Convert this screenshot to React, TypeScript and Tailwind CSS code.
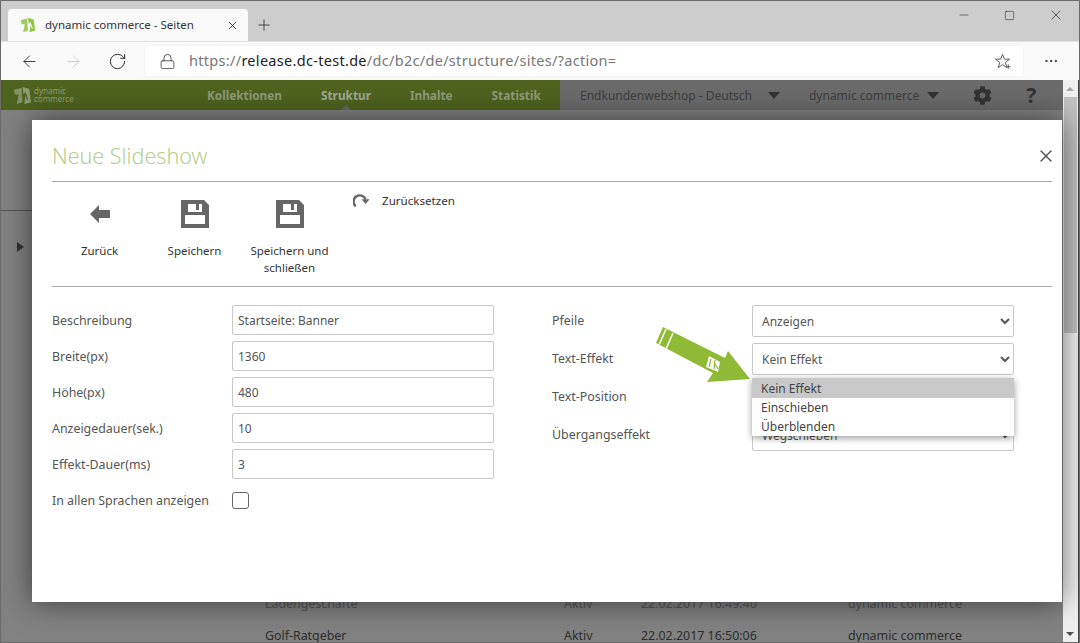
import React from "react";
import { X, Plus, ArrowLeft, ArrowRight, RotateCw, Lock, Minus, Square, MoreHorizontal } from "lucide-react";
import { FaCog } from "react-icons/fa";

const F = { fontFamily: '"Noto Sans", sans-serif' };

function Logo({ className, c = "#8cc63f" }: { className?: string; c?: string }) {
  return (
    <svg viewBox="0 0 20 20" className={className}>
      <polygon points="1,4 9,2 10,17 4,19 6,9 2,9" fill={c} opacity="0.85" />
      <polygon points="10,1 17,3 19,17 12,19 13,10 15,15 16,14 13,6 11,9" fill={c} />
    </svg>
  );
}

function Floppy() {
  return (
    <svg viewBox="0 0 28 28" className="h-[28px] w-[28px]">
      <path fillRule="evenodd" fill="#666" d="M0 0h23l5 5v23H0zM7 4v8h14V4zM15 4h3v6h-3zM4 15v9h20v-9z" />
    </svg>
  );
}

function Tool({ icon, label, w }: { icon: React.ReactNode; label: React.ReactNode; w: string }) {
  return (
    <div className={`flex flex-col items-center ${w}`}>
      <div className="flex h-[30px] items-center">{icon}</div>
      <div className="mt-[13px] text-center text-[11.5px] leading-[17px] text-[#333]">{label}</div>
    </div>
  );
}

function Field({ label, value }: { label: string; value: string }) {
  return (
    <div className="flex h-[30px] items-center">
      <label className="w-[180px] pt-[3px] text-[12.4px] text-[#555]">{label}</label>
      <input
        readOnly
        value={value}
        className="h-[30px] w-[262px] rounded-[2px] border border-[#c8c8c8] px-[5px] text-[12px] text-[#555] outline-none"
      />
    </div>
  );
}

function Sel({ label, value }: { label: string; value: string }) {
  return (
    <div className="flex h-[32px] items-center">
      <label className="w-[200px] text-[12.4px] text-[#555]">{label}</label>
      <select
        defaultValue={value}
        className="h-[32px] w-[262px] rounded-[2px] border border-[#c8c8c8] bg-white pl-[5px] text-[12px] text-[#555] outline-none"
      >
        <option>{value}</option>
      </select>
    </div>
  );
}

export default function App() {
  return (
    <div className="flex h-[643px] w-[1080px] flex-col overflow-hidden border border-[#6a6a6a]" style={F}>
      {/* tab strip */}
      <div className="flex h-[40px] shrink-0 items-end bg-[#cdcdcd] pl-[7px]">
        <div className="flex h-[32px] w-[240px] items-center rounded-t-[4px] bg-[#f9f9f9] pl-[12px] pr-[9px]">
          <Logo className="h-[16px] w-[16px]" />
          <span className="ml-[9px] flex-1 text-[11.5px] text-[#333]">dynamic commerce - Seiten</span>
          <X size={13} strokeWidth={1.6} className="text-[#222]" />
        </div>
        <Plus size={18} strokeWidth={1} className="mb-[7px] ml-[7px] text-[#222]" />
        <div className="ml-auto flex h-[40px] items-center self-start pb-[12px] text-[#222]">
          <Minus size={14} strokeWidth={1} />
          <Square size={11} strokeWidth={1.2} className="ml-[33px]" />
          <X size={16} strokeWidth={1} className="ml-[33px] mr-[15px]" />
        </div>
      </div>
      {/* toolbar */}
      <div className="flex h-[39px] shrink-0 items-center border-t border-[#e2e2e2] bg-[#f9f9f9] pl-[19px]">
        <ArrowLeft size={19} strokeWidth={1.1} className="text-[#222]" />
        <ArrowRight size={19} strokeWidth={1.1} className="ml-[25px] text-[#c4c4c4]" />
        <RotateCw size={19} strokeWidth={1.2} className="ml-[25px] text-[#222]" />
        <div className="ml-[18px] flex h-[30px] w-[878px] items-center rounded-[3px] bg-white pl-[14px] shadow-[0_0_2px_rgba(0,0,0,0.08)]">
          <Lock size={17} strokeWidth={1.1} className="text-[#333]" />
          <span className="ml-[13px] text-[14.5px] tracking-[0.3px] text-[#777]">
            https://<span className="text-[#222]">release.dc-test.de</span>/dc/b2c/de/structure/sites/?action=
          </span>
          <svg viewBox="0 0 18 18" className="ml-auto mr-[11px] h-[17px] w-[17px]" fill="none" stroke="#555" strokeWidth="1">
            <path d="M8 1.5l2 5h5.5l-4.5 3.5 1.5 5.500-4.500-3.200-4.500 3.200 1.500-5.500-4.500-3.500h5.500z" />
            <path d="M14 12v5M11.500 14.500h5" />
          </svg>
        </div>
        <MoreHorizontal size={16} strokeWidth={1.4} className="ml-[20px] text-[#222]" />
      </div>

      {/* dimmed app */}
      <div className="relative flex min-h-0 flex-1 flex-col bg-[#828282]">
        {/* app header */}
        <div className="mr-[16px] flex h-[30px] shrink-0 items-center bg-[#6b6b6b] text-[12px]">
          <div className="relative flex h-full w-[559px] shrink-0 items-center bg-[#4f631f] pl-[12px] font-bold text-[#8f9b77]">
            <Logo className="h-[19px] w-[19px]" c="#8f9b77" />
            <span className="ml-[2px] w-[36px] text-[8px] font-normal leading-[8px]">dynamic commerce</span>
            <div className="ml-[137px] flex gap-[39px] pt-[1px] text-[11.8px]">
              <span>Kollektionen</span>
              <span className="text-[#a0a896]">Struktur</span>
              <span>Inhalte</span>
              <span>Statistik</span>
            </div>
            <div className="absolute bottom-0 left-[340px] h-0 w-0 border-x-[5px] border-b-[5px] border-x-transparent border-b-[#6a6a6a]" />
          </div>
          <div className="flex flex-1 items-center pl-[20px] pt-[1px] text-[#3e3e3e]">
            <span>Endkundenwebshop - Deutsch</span>
            <div className="ml-[16px] h-0 w-0 border-x-[6px] border-t-[7px] border-x-transparent border-t-[#333]" />
            <span className="ml-[29px]">dynamic commerce</span>
            <div className="ml-[8px] h-0 w-0 border-x-[6px] border-t-[7px] border-x-transparent border-t-[#333]" />
            <FaCog size={19} className="ml-[34px] text-[#333]" />
            <span className="ml-[34px] text-[21px] font-bold leading-none text-[#333]">?</span>
          </div>
        </div>

        {/* dimmed page content */}
        <div className="relative flex-1">
          <div className="mt-[100px] h-px w-[32px] bg-[#555]" />
          <div className="ml-[16px] mt-[31px] h-0 w-0 border-y-[5px] border-l-[7px] border-y-transparent border-l-[#333]" />
          <div className="mt-[343px] flex text-[12.4px] leading-[18px] text-[#555]">
            <span className="ml-[264px] w-[299px]">Ladengeschäfte</span>
            <span className="w-[77px]">Aktiv</span>
            <span className="w-[207px]">22.02.2017 16:49:40</span>
            <span>dynamic commerce</span>
          </div>
          <div className="mt-[14px] flex text-[12.4px] leading-[18px] text-[#2e2e2e]">
            <span className="ml-[264px] w-[299px]">Golf-Ratgeber</span>
            <span className="w-[77px]">Aktiv</span>
            <span className="w-[207px]">22.02.2017 16:50:06</span>
            <span>dynamic commerce</span>
          </div>
        </div>

        {/* scrollbar */}
        <div className="absolute bottom-0 right-0 top-0 flex w-[16px] flex-col items-center border-r border-[#444] bg-[#f0f0f0] pr-[1px]">
          <div className="mt-[7px] h-0 w-0 border-x-[4px] border-b-[4px] border-x-transparent border-b-[#a8a8a8]" />
          <div className="mt-[6px] h-[236px] w-[13px] bg-[#c1c1c1]" />
          <div className="mb-[6px] mt-auto h-0 w-0 border-x-[4px] border-t-[4px] border-x-transparent border-t-[#505050]" />
        </div>

        {/* modal */}
        <div className="absolute left-[31px] top-[40px] h-[482px] w-[1030px] bg-white pl-[20px] pr-[10px] shadow-[0_0_28px_rgba(0,0,0,0.55)]">
          <div className="flex h-[62px] items-center justify-between border-b border-[#aaa]">
            <span className="pt-[12px] text-[21.500px] font-light text-[#b5cd8e]">Neue Slideshow</span>
            <X size={20} strokeWidth={1.8} className="mr-[-4px] mt-[10px] text-[#555]" />
          </div>
          <div className="flex h-[105px] items-start border-b border-[#aaa] pt-[17px]">
            <Tool
              w="w-[95px]"
              label="Zurück"
              icon={
                <svg viewBox="0 0 20 18" className="h-[18px] w-[20px]">
                  <path fill="#666" d="M0 9l9-9v5h11v8H9v5z" />
                </svg>
              }
            />
            <Tool w="w-[95px]" label="Speichern" icon={<Floppy />} />
            <Tool w="w-[95px]" label={<>Speichern und<br />schließen</>} icon={<Floppy />} />
            <div className="ml-[16px] mt-[-7px] flex items-center">
              <svg viewBox="0 0 20 18" className="h-[16px] w-[18px]">
                <path fill="none" stroke="#666" strokeWidth="2.600" d="M3 15A7 7 0 1 1 14 7" />
                <path fill="#666" d="M9.500 7h9l-4.500 5.500z" />
              </svg>
              <span className="ml-[11px] text-[11.6px] text-[#333]">Zurücksetzen</span>
            </div>
          </div>

          <div className="flex pt-[18px]">
            <div className="flex w-[500px] flex-col gap-[6px]">
              <Field label="Beschreibung" value="Startseite: Banner" />
              <Field label="Breite(px)" value="1360" />
              <Field label="Höhe(px)" value="480" />
              <Field label="Anzeigedauer(sek.)" value="10" />
              <Field label="Effekt-Dauer(ms)" value="3" />
              <div className="flex h-[30px] items-center">
                <label className="w-[180px] pt-[3px] text-[12.4px] text-[#555]">In allen Sprachen anzeigen</label>
                <div className="h-[17px] w-[17px] rounded-[3px] border border-[#666] bg-white" />
              </div>
            </div>
            <div className="flex flex-col gap-[6px]">
              <Sel label="Pfeile" value="Anzeigen" />
              <Sel label="Text-Effekt" value="Kein Effekt" />
              <Sel label="Text-Position" value="Links" />
              <Sel label="Übergangseffekt" value="Wegschieben" />
            </div>
          </div>

          {/* pointer arrow */}
          <svg viewBox="0 0 95 56" className="absolute left-[624px] top-[207px] h-[56px] w-[95px]">
            <polygon points="0,16 7,0 69,31 72,24 94,52 51,55 57,46" fill="#8fba36" />
            <path d="M10,2 L3,18 M17,6 L10,22" stroke="#fff" strokeWidth="1.500" />
            <polygon points="53,29 64,35 62,45 50,40" fill="#fff" />
            <path d="M55,32 L53,40 M59,33 L58,42 M59,37 L62,42" stroke="#8fba36" strokeWidth="1.200" fill="none" />
          </svg>

          {/* open dropdown */}
          <div className="absolute left-[720px] top-[258px] flex h-[58px] w-[262px] flex-col bg-white text-[12px] leading-[19px] text-[#444] shadow-[0_2px_7px_rgba(0,0,0,0.4)]">
            <div className="h-[20px] bg-[#c8c8c8] pl-[9px] pt-[1px]">Kein Effekt</div>
            <div className="h-[19px] pl-[9px]">Einschieben</div>
            <div className="h-[19px] pl-[9px]">Überblenden</div>
          </div>
        </div>
      </div>
    </div>
  );
}
